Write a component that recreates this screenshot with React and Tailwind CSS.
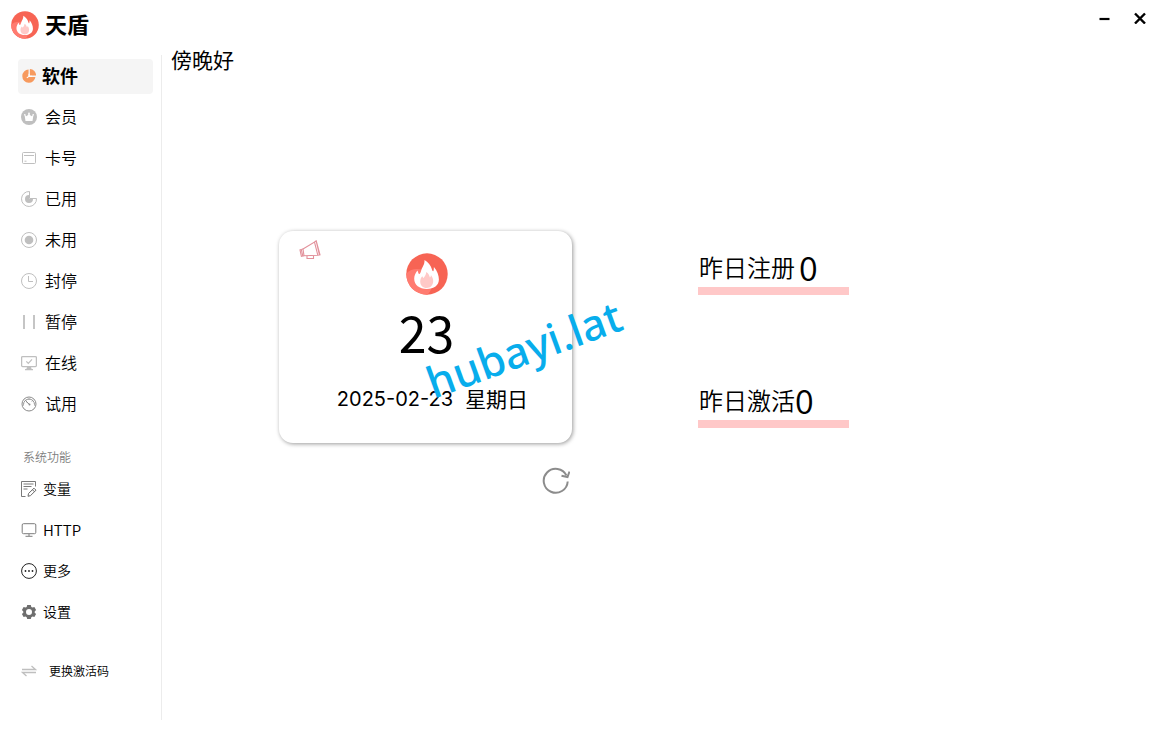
import React from "react";

function FlameLogo({ className }) {
  return (
    <svg viewBox="0 0 42 42" className={className} aria-hidden="true">
      <defs>
        <clipPath id="disc">
          <circle cx="21" cy="21" r="20.7" />
        </clipPath>
      </defs>
      <circle cx="21" cy="21" r="20.7" fill="#f76454" />
      <g clipPath="url(#disc)">
        <circle cx="11" cy="31" r="15" fill="#ff7b70" />
      </g>
      <path
        d="M18.500 7c3.500 2 6.500 5.500 7.300 9 .6 1.600.9 2.400 1.400 2.200.6-.3.500-2.300.7-4.300 3.400 4 5 8.600 5 12.600 0 5.700-4.900 9.500-12.200 9.500S8.200 32 8.200 25.800c0-3.200 1.200-5.600 3.200-8.300.9 1.700 1 3.500 1.800 3.500 1 0 1.500-1.800 2.200-4.200.9-3 3.300-5 3.100-9.800z"
        fill="#fff"
      />
      <path
        d="M20.300 19c2.500 1.600 3.200 3.900 3.600 5.500.8-.5 1-1.400 1-2.400 1.500 2 2.300 4 2.300 6 0 4.200-2.700 7-6.500 7s-6.500-2.800-6.500-6.600c0-2.200.8-3.800 2.100-5.200.4.8.7 1.500 1.300 1.600 1.200-1.400 2.400-3 2.700-5.900z"
        fill="#ffc9c7"
      />
    </svg>
  );
}

function Icon({ children, className = "size-4", color = "text-[#bfbfbf]" }) {
  return (
    <svg
      viewBox="0 0 16 16"
      fill="none"
      stroke="currentColor"
      strokeWidth="1"
      className={`shrink-0 ${className} ${color}`}
      aria-hidden="true"
    >
      {children}
    </svg>
  );
}

const mainItems = [
  {
    label: "会员",
    icon: (
      <Icon>
        <circle cx="8" cy="8" r="8" fill="currentColor" stroke="none" />
        <path d="M3.500 5.800l2.300 1.500L8 4.500l2.200 2.800 2.300-1.500-1 6.200h-7z" fill="#fff" stroke="none" />
        <circle cx="8" cy="4.300" r=".9" fill="#fff" stroke="none" />
        <circle cx="3.800" cy="5.700" r=".8" fill="#fff" stroke="none" />
        <circle cx="12.200" cy="5.700" r=".8" fill="#fff" stroke="none" />
      </Icon>
    ),
  },
  {
    label: "卡号",
    icon: (
      <Icon>
        <rect x="1.500" y="2.500" width="13" height="11" rx="1" />
        <path d="M3 5.500h10M3.500 11.200h2" />
      </Icon>
    ),
  },
  {
    label: "已用",
    icon: (
      <Icon>
        <path d="M8.500.5A7.500 7.500 0 1 0 15.500 7.500H8.500z" />
        <path d="M8 4a4 4 0 1 0 4 4H8z" fill="currentColor" stroke="none" />
      </Icon>
    ),
  },
  {
    label: "未用",
    icon: (
      <Icon>
        <circle cx="8" cy="8" r="7.500" />
        <circle cx="8" cy="8" r="4.300" fill="currentColor" stroke="none" />
      </Icon>
    ),
  },
  {
    label: "封停",
    icon: (
      <Icon>
        <circle cx="8" cy="8" r="7.500" />
        <path d="M7.500 3v5.500H12" />
      </Icon>
    ),
  },
  {
    label: "暂停",
    icon: (
      <Icon>
        <path d="M3 1v14M13 1v14" strokeWidth="1.800" />
      </Icon>
    ),
  },
  {
    label: "在线",
    icon: (
      <Icon>
        <rect x=".6" y="1.600" width="14.800" height="10" rx="1" strokeWidth="1.300" />
        <path d="M5.300 6.300l2 2L11 4.300" strokeWidth="1.200" />
        <path d="M6 12h4l.6 2H12v1.200H4V14h1.400z" fill="currentColor" stroke="none" />
      </Icon>
    ),
  },
  {
    label: "试用",
    icon: (
      <Icon color="text-[#8a8a8a]">
        <circle cx="8" cy="8" r="7" />
        <path d="M2.500 9.500V8.500a5.500 5.500 0 0 1 11 0v1M4.500 4.500l4 4" strokeWidth=".9" />
        <path d="M4.800 4.300l1.800 3M11.800 4.300l-1 1.200M8 2.500v1.300" strokeWidth=".8" />
        <circle cx="8.500" cy="8.500" r="1" fill="currentColor" stroke="none" />
      </Icon>
    ),
  },
];

const systemItems = [
  {
    label: "变量",
    icon: (
      <Icon color="text-[#6b6b6b]">
        <path d="M14.500 5.500v-5H.5v15h4M2.500 3h10M2.500 5.500h8M2.500 8h4" strokeWidth=".9" />
        <path d="M7 15.300l.5-2.800 5.500-5.300 2 2-5.500 5.400zM11.500 8.800l2 2" />
      </Icon>
    ),
  },
  {
    label: "HTTP",
    icon: (
      <Icon color="text-[#7d7d7d]">
        <rect x="1.200" y="1.700" width="13.600" height="10" rx="1.300" />
        <path d="M8 12v2M4.500 14.300h7" />
      </Icon>
    ),
  },
  {
    label: "更多",
    icon: (
      <Icon color="text-[#222222]">
        <circle cx="8" cy="8" r="7.400" />
        <g fill="currentColor" stroke="none">
          <circle cx="4.500" cy="8" r=".9" />
          <circle cx="8" cy="8" r=".9" />
          <circle cx="11.500" cy="8" r=".9" />
        </g>
      </Icon>
    ),
  },
  {
    label: "设置",
    icon: (
      <Icon color="text-[#6e6e6e]">
        <path
          fill="currentColor"
          stroke="none"
          fillRule="evenodd"
          d="M6.200 1h3.600l.5 1.900 1.200.7 1.900-.5 1.700 3-1.400 1.300v1.300l1.400 1.300-1.700 3-1.900-.5-1.200.7-.5 1.900H6.200l-.5-1.900-1.200-.7-1.900.5-1.700-3 1.400-1.300V7.400L.9 6.100l1.700-3 1.900.5 1.200-.7zM8 5a3 3 0 1 0 0 6 3 3 0 0 0 0-6z"
        />
      </Icon>
    ),
  },
];

function Stat({ label, value, gap }) {
  return (
    <div className="w-[151px] border-b-8 border-[#ffc8c8] pb-1">
      <div className={`flex h-8 items-center pl-px font-[350] ${gap}`}>
        <span className="text-[24px] leading-8">{label}</span>
        <span className="text-[34px] leading-8">{value}</span>
      </div>
    </div>
  );
}

export default function App() {
  return (
    <div className="flex min-h-screen flex-col bg-white pb-2.5 font-['Noto_Sans_CJK_SC',sans-serif] text-black">
      <header className="flex h-12 items-start justify-between pl-[11px]">
        <div className="flex items-start gap-1.5 pt-[11px]">
          <FlameLogo className="size-7" />
          <h1 className="text-[22px] leading-6 font-bold">天盾</h1>
        </div>
        <div className="flex pr-2 pt-1.5">
          <button type="button" aria-label="最小化" className="flex h-6 w-9 items-center justify-center">
            <svg viewBox="0 0 12 12" className="size-3" stroke="#000" strokeWidth="2.200" aria-hidden="true">
              <path d="M1.500 7h10" />
            </svg>
          </button>
          <button type="button" aria-label="关闭" className="flex h-6 w-9 items-center justify-center">
            <svg viewBox="0 0 12 12" className="size-3" stroke="#000" strokeWidth="2.400" aria-hidden="true">
              <path d="M1 1.500l10 10M11 1.500l-10 10" />
            </svg>
          </button>
        </div>
      </header>

      <div className="flex grow">
        <aside className="mt-[7px] w-[162px] shrink-0 border-r border-[#ececec] pt-1 pl-[18px]">
          <nav>
            <ul className="flex flex-col gap-1.5">
              <li>
                <button
                  type="button"
                  aria-current="page"
                  className="flex h-[35px] w-[135px] items-center gap-1.5 rounded bg-[#f5f5f5] pb-0.5 pl-1 text-[18px] font-bold"
                >
                  <Icon className="size-3.5" color="text-[#f79a5e]">
                    <path d="M7.500.7A7.500 7.500 0 1 0 15.300 9H7.500z" fill="currentColor" stroke="none" />
                    <path d="M9 0a7 7 0 0 1 7 7.500H9z" fill="currentColor" stroke="none" />
                    <path d="M8 5.500V9M8.500 8.300h3M7.500 8.700L5.500 10.200" stroke="#fff" strokeWidth="1.200" />
                  </Icon>
                  软件
                </button>
              </li>
              {mainItems.map((item) => (
                <li key={item.label}>
                  <button
                    type="button"
                    className="flex h-[35px] w-[135px] items-center gap-2 pb-0.5 pl-[3px] text-[16px] leading-5 font-[350]"
                  >
                    {item.icon}
                    <span className="pb-0.5">{item.label}</span>
                  </button>
                </li>
              ))}
            </ul>
            <h2 className="mt-6 pl-[5px] text-[12px] leading-[22px] font-[350] text-[#808080]">系统功能</h2>
            <ul className="mt-1 flex flex-col gap-1.5">
              {systemItems.map((item) => (
                <li key={item.label}>
                  <button
                    type="button"
                    className="flex h-[35px] w-[135px] items-center gap-1.5 pb-0.5 pl-[3px] leading-5 font-[350]"
                  >
                    {item.icon}
                    <span className={item.label === "HTTP" ? "text-[15px]" : "pb-0.5 text-[14px]"}>{item.label}</span>
                  </button>
                </li>
              ))}
            </ul>
            <button
              type="button"
              className="mt-6 flex h-[35px] w-[135px] items-center gap-3 pb-0.5 pl-[3px] text-[12px] font-[350]"
            >
              <Icon>
                <path d="M1 6.500h13.500L10.500 3M15 9.500H1.500l4 3.500" strokeWidth="1.300" />
              </Icon>
              更换激活码
            </button>
          </nav>
        </aside>

        <main className="grow pl-[9px]">
          <p className="text-[21px] leading-[22px]">傍晚好</p>

          <div className="mt-[161px] flex items-start gap-[126px] pl-[108px]">
            <div className="flex flex-col items-end">
              <section className="relative flex h-[212px] w-[293px] flex-col items-center rounded-[14px] bg-white pt-[22px] pl-0.5 shadow-[1px_1px_4px_0_rgba(0,0,0,0.4)]">
                <svg
                  viewBox="0 0 22 20"
                  className="absolute top-[9px] left-5 h-5 w-[22px]"
                  fill="none"
                  stroke="#e2909a"
                  strokeWidth="1.100"
                  aria-hidden="true"
                >
                  <path d="M4 9L15.500 2l3.300 13.200L5 15.800zM15.500 2l1.700-1.200 3.800 14-2.200.4M17.200 1.200l3.200 13.500" />
                  <path d="M4 9l-3 .8 1.400 6.600L5 15.800M2.300 9.600l1.500 6.300M8 16v2.500h6.500V16M9 18.500h4.500" />
                </svg>
                <FlameLogo className="size-[42px]" />
                <p className="mt-2 text-[50px] leading-[56px]">23</p>
                <p className="mt-6 flex items-start gap-3 pl-3">
                  <span className="font-[Inter,sans-serif] text-[20px] leading-8">2025-02-23</span>
                  <span className="text-[21px] leading-[30px]">星期日</span>
                </p>
                <span className="pointer-events-none absolute top-[88px] left-[143px] -rotate-20 font-['Noto_Sans',sans-serif] text-[43px] leading-[60px] font-medium whitespace-nowrap text-[#08adec]">
                  hubayi.lat
                </span>
              </section>
              <button type="button" aria-label="刷新" className="mt-[23px] mr-0.5 size-7">
                <svg viewBox="0 0 28 28" className="size-7" fill="none" stroke="#8c8c8c" strokeWidth="2" aria-hidden="true">
                  <path d="M25.700 15.500A12 12 0 1 1 24.500 9.500" />
                  <path d="M19.500 9.800l6 1.300L27.500 5.500" />
                </svg>
              </button>
            </div>

            <div className="flex flex-col gap-[89px] pt-5">
              <Stat label="昨日注册" value="0" gap="gap-1" />
              <Stat label="昨日激活" value="0" gap="gap-0" />
            </div>
          </div>
        </main>
      </div>
    </div>
  );
}
